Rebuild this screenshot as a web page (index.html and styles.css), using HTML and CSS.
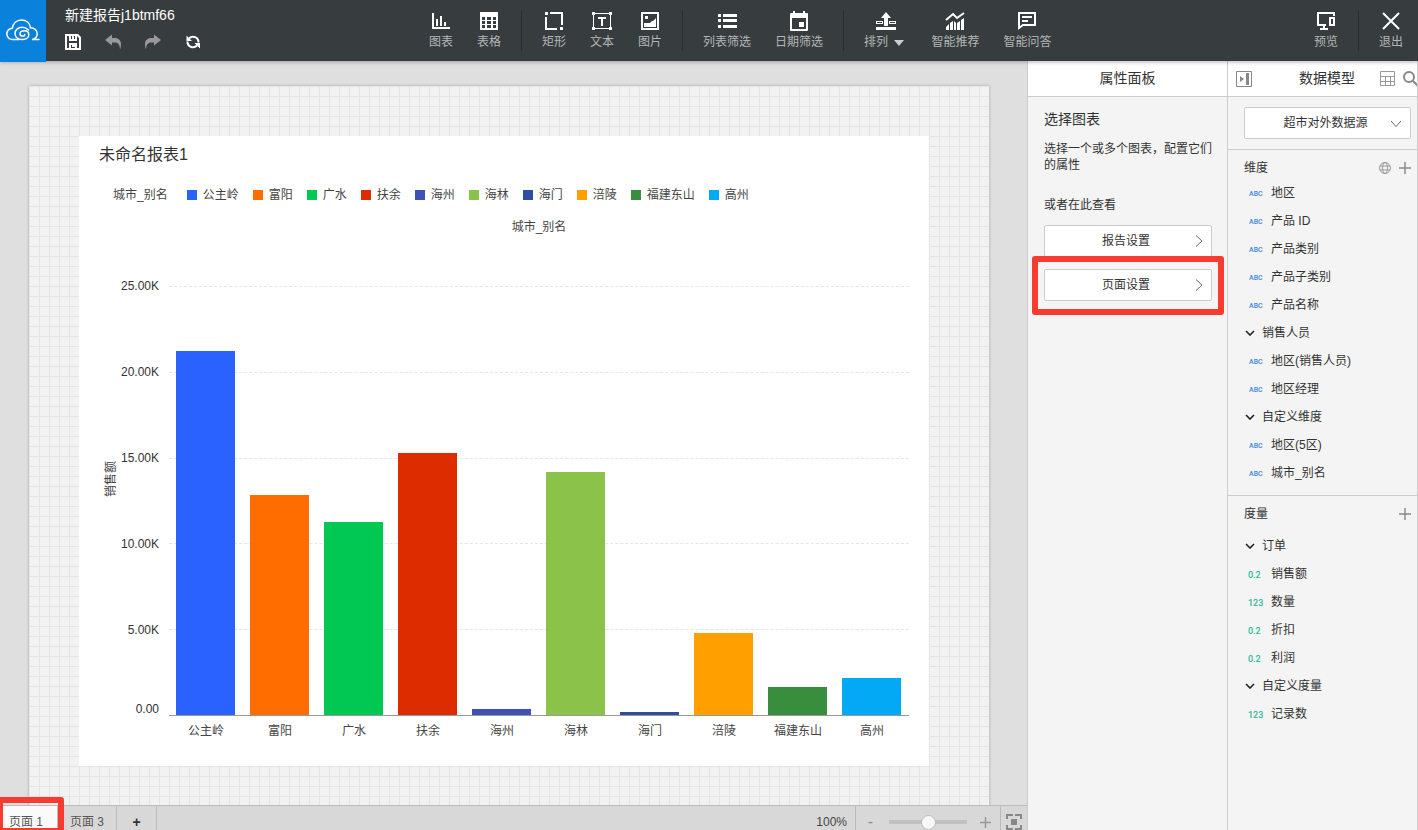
FILE: index.html
```html
<!DOCTYPE html>
<html lang="zh-CN">
<head>
  <meta charset="UTF-8">
  <meta name="viewport" content="width=device-width, initial-scale=1.0">
  <title>新建报告j1btmf66</title>
  <link rel="stylesheet" href="styles.css">
</head>
<body>
  <!-- 顶部工具栏 -->
  <header class="topbar">
    <a class="logo" href="#" aria-label="首页">
      <svg width="34" height="24" viewBox="0 0 34 24" fill="none" stroke="#fff" stroke-width="1.5" stroke-linecap="round">
        <path d="M13 20.500H6.500A5.600 5.600 0 0 1 6.300 9.300C7 4.500 10.500 1 15.500 1c4.700 0 8.300 3.200 9 7.800 4 0 6.700 2.700 6.700 6 0 3-2 5.200-5.200 5.700h7"/>
        <path d="M22.500 11C20.800 9.200 18.500 8.300 16 8.300c-4 0-7 2.700-7 6.200s3 6 7 6c4.200 0 6.800-2.200 6.800-4.800 0-2.400-2-3.900-4.400-3.900-2.600 0-4.400 1.200-4.400 2.900 0 1.500 1.200 2.400 2.700 2.400 1.200 0 2.100-.6 2.100-1.600"/>
      </svg>
    </a>
    <div class="report">
      <div class="report-name">新建报告j1btmf66</div>
      <div class="report-actions">
        <button aria-label="保存">
          <svg width="16" height="16" viewBox="0 0 16 16"><path fill="#fff" fill-rule="evenodd" d="M0 0h13l3 3v13H0zM2 2v12h2V9h8v5h2V4l-2-2v5H4V2zM6 2v3h1V2zM9 2v3h1V2zM6 11v3h4v-1H7v-2z"/></svg>
        </button>
        <button aria-label="撤销">
          <svg width="16" height="16" viewBox="0 0 16 16"><path fill="#999" d="M0 6l7-5.500v3.500h3c3.500 0 6 2.500 6 6 0 2-.3 4-1 5.500C15 11 13 8.500 10 8.500H7v3z"/></svg>
        </button>
        <button aria-label="重做">
          <svg width="16" height="16" viewBox="0 0 16 16"><path fill="#999" d="M16 6l-7-5.500v3.500H6c-3.500 0-6 2.500-6 6 0 2 .3 4 1 5.500C1 11 3 8.500 6 8.500h3v3z"/></svg>
        </button>
        <button aria-label="刷新">
          <svg width="16" height="16" viewBox="0 0 16 16" fill="none" stroke="#fff" stroke-width="2"><path d="M4 4.500a5.500 5.500 0 0 1 9.500 4M12 11.500A5.500 5.500 0 0 1 2.500 7.500"/><path fill="#fff" stroke="none" d="M1.500 1.500V7H7zM15 14.500V9H9.500z"/></svg>
        </button>
      </div>
    </div>
    <nav class="tools">
      <button class="tool">
        <svg width="20" height="20" viewBox="0 0 20 20" fill="#fff"><path d="M1 2h2v14h16v2H1zM5 8h2v7H5zM9 5h2v10H9zM13 11h2v4h-2z"/></svg>
        <span>图表</span>
      </button>
      <button class="tool">
        <svg width="20" height="20" viewBox="0 0 20 20"><path fill="#fff" fill-rule="evenodd" d="M1 1h18v18H1zM3 6v3h3V6zM8 6v3h4V6zM14 6v3h3V6zM3 10v3h3v-3zM8 10v3h4v-3zM14 10v3h3v-3zM3 14v3h3v-3zM8 14v3h4v-3zM14 14v3h3v-3z"/></svg>
        <span>表格</span>
      </button>
      <i class="sep"></i>
      <button class="tool">
        <svg width="20" height="20" viewBox="0 0 20 20"><path fill="#fff" d="M1 1h3v3H1zM6 1h13v13h-2V3H6zM1 6h2v11h10v2H1zM16 16h3v3h-3z"/></svg>
        <span>矩形</span>
      </button>
      <button class="tool">
        <svg width="20" height="20" viewBox="0 0 20 20"><path fill="none" stroke="#fff" d="M1.500 2.500h17v15h-17z"/><path fill="#fff" d="M0 1h3v3H0zM17 1h3v3h-3zM0 16h3v3H0zM17 16h3v3h-3zM6 6h8v2h-3v7H9V8H6z"/></svg>
        <span>文本</span>
      </button>
      <button class="tool">
        <svg width="20" height="20" viewBox="0 0 20 20"><path fill="none" stroke="#fff" stroke-width="2" d="M2 2h16v16H2z"/><path fill="#fff" d="M5 5h3v3H5zM4 12h6l2-2h1l3-3v9H4z"/></svg>
        <span>图片</span>
      </button>
      <i class="sep"></i>
      <button class="tool">
        <svg width="20" height="20" viewBox="0 0 20 20"><path fill="#fff" d="M1 3h3v3H1zM6 3h14v3H6zM1 8h3v3H1zM6 8h14v3H6zM1 14h3v3H1zM6 14h14v3H6z"/></svg>
        <span>列表筛选</span>
      </button>
      <button class="tool">
        <svg width="20" height="20" viewBox="0 0 20 20"><path fill="#fff" fill-rule="evenodd" d="M1 3q0-1 1-1h2V0h2v2h8V0h2v2h2q1 0 1 1v16q0 1-1 1H2q-1 0-1-1zM3 7v11h14V7zM10 11h5v5h-5z"/></svg>
        <span>日期筛选</span>
      </button>
      <i class="sep"></i>
      <button class="tool">
        <svg width="20" height="20" viewBox="0 0 20 20"><path fill="#fff" fill-rule="evenodd" d="M10 1l5 6h-3v8H8V7H5zM0 10h7v3H0zM1 11v1h5v-1zM13 10h7v3h-7zM14 11v1h5v-1zM0 16h20v3H0z"/></svg>
        <span>排列 <i class="caret"></i></span>
      </button>
      <button class="tool">
        <svg width="20" height="20" viewBox="0 0 20 20"><path fill="none" stroke="#fff" stroke-width="2" d="M1 9l7-6 4 4 7-5"/><path fill="#fff" d="M1 16l3-3v6H1zM5 12l3-2v9H5zM9 10l2 2v7H9zM12 12l3-2v9h-3zM16 9l3-2v12h-3z"/></svg>
        <span>智能推荐</span>
      </button>
      <button class="tool">
        <svg width="20" height="20" viewBox="0 0 20 20"><path fill="none" stroke="#fff" stroke-width="2" d="M2 2h16v12H6l-4 3zM5 6h10M5 10h6"/></svg>
        <span>智能问答</span>
      </button>
    </nav>
    <nav class="tools tools-end">
      <button class="tool">
        <svg width="20" height="20" viewBox="0 0 20 20"><path fill="none" stroke="#fff" stroke-width="2" d="M18 5V2H2v12h8M14 7h4v7h-4zM8 14v4M4 18h8"/></svg>
        <span>预览</span>
      </button>
      <i class="sep"></i>
      <button class="tool">
        <svg width="20" height="20" viewBox="0 0 20 20"><path stroke="#fff" stroke-width="2" d="M2 2l16 16M18 2L2 18"/></svg>
        <span>退出</span>
      </button>
    </nav>
  </header>

  <div class="layout">
    <!-- 画布 -->
    <main class="workspace">
      <div class="stage">
        <div class="sheet">
          <section class="card">
            <h1 class="card-title">未命名报表1</h1>
            <div class="legend">
              <span class="legend-title">城市_别名</span>
              <span class="legend-item c1">公主岭</span>
              <span class="legend-item c2">富阳</span>
              <span class="legend-item c3">广水</span>
              <span class="legend-item c4">扶余</span>
              <span class="legend-item c5">海州</span>
              <span class="legend-item c6">海林</span>
              <span class="legend-item c7">海门</span>
              <span class="legend-item c8">涪陵</span>
              <span class="legend-item c9">福建东山</span>
              <span class="legend-item c10">高州</span>
            </div>
            <div class="axis-title">城市_别名</div>
            <div class="chart">
              <div class="y-title">销售额</div>
              <div class="y-axis">
                <span>25.00K</span>
                <span>20.00K</span>
                <span>15.00K</span>
                <span>10.00K</span>
                <span>5.00K</span>
                <b>0.00</b>
              </div>
              <div class="plot">
                <div class="lines"><i></i><i></i><i></i><i></i><i></i></div>
                <div class="bars">
                  <div class="bar c1" style="height:84.8%"></div>
                  <div class="bar c2" style="height:51.3%"></div>
                  <div class="bar c3" style="height:45%"></div>
                  <div class="bar c4" style="height:61.1%"></div>
                  <div class="bar c5" style="height:1.4%"></div>
                  <div class="bar c6" style="height:56.6%"></div>
                  <div class="bar c7" style="height:0.7%"></div>
                  <div class="bar c8" style="height:19.1%"></div>
                  <div class="bar c9" style="height:6.5%"></div>
                  <div class="bar c10" style="height:8.6%"></div>
                </div>
              </div>
              <div class="x-axis">
                <span>公主岭</span><span>富阳</span><span>广水</span><span>扶余</span><span>海州</span><span>海林</span><span>海门</span><span>涪陵</span><span>福建东山</span><span>高州</span>
              </div>
            </div>
          </section>
        </div>
      </div>

      <!-- 页签与缩放 -->
      <footer class="bottombar">
        <div class="tab-wrap">
          <button class="tab active">页面 1</button>
          <div class="mark mark-tab"></div>
        </div>
        <button class="tab">页面 3</button>
        <button class="tab tab-add" aria-label="新增页面">+</button>
        <span class="zoom-value">100%</span>
        <div class="zoom">
          <button aria-label="缩小">-</button>
          <input type="range" min="0" max="200" value="100" aria-label="缩放">
          <button aria-label="放大">
            <svg width="11" height="11" viewBox="0 0 11 11"><path stroke="#999" stroke-width="1.500" d="M0 5.500h11M5.500 0v11"/></svg>
          </button>
        </div>
        <button class="fit" aria-label="适应画布">
          <svg width="16" height="16" viewBox="0 0 16 16"><path fill="#888" d="M0 0h7v2H2v3H0zM9 0h7v5h-2V2H9zM0 11h2v3h5v2H0zM14 11h2v5H9v-2h5zM5 5h6v6H5z"/></svg>
        </button>
      </footer>
    </main>

    <!-- 属性面板 -->
    <aside class="panel props">
      <div class="panel-head">属性面板</div>
      <div class="props-body">
        <h2>选择图表</h2>
        <p class="hint">选择一个或多个图表，配置它们的属性</p>
        <p class="see">或者在此查看</p>
        <button class="setting">
          <span>报告设置</span>
          <svg width="8" height="12" viewBox="0 0 8 12"><path fill="none" stroke="#666" d="M1 .5L7 6l-6 5.500"/></svg>
        </button>
        <div class="marked">
          <button class="setting">
            <span>页面设置</span>
            <svg width="8" height="12" viewBox="0 0 8 12"><path fill="none" stroke="#666" d="M1 .5L7 6l-6 5.500"/></svg>
          </button>
          <div class="mark mark-setting"></div>
        </div>
      </div>
    </aside>

    <!-- 数据模型 -->
    <aside class="panel model">
      <div class="panel-head model-head">
        <button aria-label="收起">
          <svg width="16" height="16" viewBox="0 0 16 16"><path fill="none" stroke="#888" d="M.5.5h15v15H.5z"/><path fill="#888" d="M4 5l4 3-4 3zM10 2h3v12h-3z"/></svg>
        </button>
        <span>数据模型</span>
        <button aria-label="计算">
          <svg width="15" height="15" viewBox="0 0 15 15"><path fill="none" stroke="#999" d="M.5.5h14v14H.5zM0 5.500h15M0 10.500h15M5.500 5v10M10.500 5v10"/></svg>
        </button>
        <button aria-label="搜索">
          <svg width="16" height="16" viewBox="0 0 16 16"><circle cx="6" cy="6" r="5" fill="none" stroke="#888" stroke-width="2"/><path stroke="#888" stroke-width="2" d="M9.500 9.500l6 6"/></svg>
        </button>
      </div>
      <div class="source">
        <select aria-label="数据源">
          <option>超市对外数据源</option>
        </select>
        <svg width="12" height="8" viewBox="0 0 12 8"><path fill="none" stroke="#666" d="M1 1l5 5.500L11 1"/></svg>
      </div>
      <section class="fields dims">
        <div class="fields-head">
          <h3>维度</h3>
          <button aria-label="地理角色">
            <svg width="12" height="12" viewBox="0 0 12 12" fill="none" stroke="#999"><circle cx="6" cy="6" r="5.500"/><ellipse cx="6" cy="6" rx="2.500" ry="5.500"/><path d="M1 4h10M1 8h10"/></svg>
          </button>
          <button aria-label="添加维度">
            <svg width="12" height="12" viewBox="0 0 12 12"><path stroke="#888" stroke-width="1.400" d="M0 6h12M6 0v12"/></svg>
          </button>
        </div>
        <ul>
          <li><i class="abc">ABC</i>地区</li>
          <li><i class="abc">ABC</i>产品 ID</li>
          <li><i class="abc">ABC</i>产品类别</li>
          <li><i class="abc">ABC</i>产品子类别</li>
          <li><i class="abc">ABC</i>产品名称</li>
          <li class="group"><svg width="10" height="6" viewBox="0 0 10 6"><path fill="none" stroke="#222" stroke-width="1.600" d="M1 1l4 4 4-4"/></svg>销售人员</li>
          <li><i class="abc">ABC</i>地区(销售人员)</li>
          <li><i class="abc">ABC</i>地区经理</li>
          <li class="group"><svg width="10" height="6" viewBox="0 0 10 6"><path fill="none" stroke="#222" stroke-width="1.600" d="M1 1l4 4 4-4"/></svg>自定义维度</li>
          <li><i class="abc">ABC</i>地区(5区)</li>
          <li><i class="abc">ABC</i>城市_别名</li>
        </ul>
      </section>
      <section class="fields measures">
        <div class="fields-head">
          <h3>度量</h3>
          <button aria-label="添加度量">
            <svg width="12" height="12" viewBox="0 0 12 12"><path stroke="#888" stroke-width="1.400" d="M0 6h12M6 0v12"/></svg>
          </button>
        </div>
        <ul>
          <li class="group"><svg width="10" height="6" viewBox="0 0 10 6"><path fill="none" stroke="#222" stroke-width="1.600" d="M1 1l4 4 4-4"/></svg>订单</li>
          <li><i class="num">0.2</i>销售额</li>
          <li><i class="num">123</i>数量</li>
          <li><i class="num">0.2</i>折扣</li>
          <li><i class="num">0.2</i>利润</li>
          <li class="group"><svg width="10" height="6" viewBox="0 0 10 6"><path fill="none" stroke="#222" stroke-width="1.600" d="M1 1l4 4 4-4"/></svg>自定义度量</li>
          <li><i class="num">123</i>记录数</li>
        </ul>
      </section>
    </aside>
  </div>
</body>
</html>
```

FILE: styles.css
```css
* { box-sizing:border-box; }
body { margin:0; height:100vh; display:flex; flex-direction:column; overflow:hidden; font-family:"Liberation Sans","Noto Sans CJK SC",sans-serif; font-size:12px; line-height:16px; color:#333; background:#f4f4f4; }
h1, h2, h3, p, ul { margin:0; padding:0; font-weight:normal; }
ul { list-style:none; }
i { font-style:normal; }
svg { display:block; flex:none; }
button { padding:0; border:0; background:none; font:inherit; color:inherit; cursor:pointer; }

/* 顶部工具栏 */
.topbar { display:flex; flex:none; height:61px; background:#373d3f; box-shadow:0 1px 4px rgba(0,0,0,0.3); position:relative; z-index:5; }
.logo { display:flex; justify-content:center; align-items:center; flex:none; width:46px; height:62px; background:#0a82dc; }
.report { flex:none; width:371px; padding:6px 0 0 19px; color:#fff; }
.report-name { font-size:14px; line-height:18px; }
.report-actions { display:flex; gap:24px; margin-top:10px; }
.tools { display:flex; align-items:center; }
.tools-end { margin-left:auto; padding-right:3px; }
.tool { display:flex; flex-direction:column; align-items:center; gap:3px; padding:0 12px; color:#b3b5b6; white-space:nowrap; }
.sep { width:1px; height:40px; margin:0 8px; background:#282c2e; }
.caret { display:inline-block; margin:0 3px; border:5px solid transparent; border-top:6px solid #ccc; border-bottom:0; }

.layout { display:flex; flex:1; min-height:0; }

/* 画布 */
.workspace { display:flex; flex-direction:column; flex:1; min-width:0; background:#dfdfdf; }
.stage { flex:1; min-height:0; padding:25px 38px 0 29px; overflow:hidden; }
.sheet {
  height:1000px; padding:50px 60px 0 50px; background-color:#f2f2f2; box-shadow:0 0 3px rgba(0,0,0,0.25);
  background-image:linear-gradient(to right,#e4e4e4 1px,transparent 1px),linear-gradient(to bottom,#e4e4e4 1px,transparent 1px);
  background-size:10px 10px;
}
.card { height:630px; padding:9px 20px 20px; background:#fff; display:flex; flex-direction:column; }
.card-title { font-size:16px; line-height:20px; }
.legend { display:flex; align-items:center; gap:14px; margin:22px 0 0 14px; color:#444; }
.legend-title { margin-right:5px; }
.legend-item { display:flex; align-items:center; gap:6px; }
.legend-item::before { content:""; width:10px; height:10px; background:var(--c); }
.axis-title { margin-top:16px; padding-left:70px; text-align:center; }
.axis-title, .x-axis, .y-title { color:#444; }
.chart { flex:1; display:grid; grid-template-columns:20px 50px 1fr; grid-template-rows:1fr 30px; margin-top:51px; }
.y-title { writing-mode:vertical-rl; text-orientation:sideways; transform:rotate(180deg); justify-self:end; align-self:center; margin-bottom:44px; }
.y-axis { display:flex; flex-direction:column; text-align:right; padding-right:10px; }
.y-axis span { flex:1; margin-top:-8px; padding-bottom:8px; }
.y-axis b { height:0; margin-top:-15px; padding-bottom:15px; font-weight:normal; }
.plot { display:grid; border-bottom:1px solid #999; }
.lines, .bars { grid-area:1 / 1; display:flex; }
.lines { flex-direction:column; }
.lines i { flex:1; border-top:1px dashed #e5e5e5; }
.bars { align-items:flex-end; }
.bar { flex:1; border:solid transparent; border-width:0 8px 0 7px; background:var(--c); background-clip:padding-box; }
.x-axis { grid-column:3; display:flex; text-align:center; padding-top:7px; }
.x-axis span { flex:1; }

.c1 { --c:#2962ff; }
.c2 { --c:#ff6d00; }
.c3 { --c:#00c853; }
.c4 { --c:#dd2c00; }
.c5 { --c:#3f51b5; }
.c6 { --c:#8bc34a; }
.c7 { --c:#304ba3; }
.c8 { --c:#ffa000; }
.c9 { --c:#388e3c; }
.c10 { --c:#03a9f4; }

/* 底部页签，超出窗口的部分被裁掉 */
.bottombar { display:flex; flex:none; height:25px; border-top:1px solid #bbb; background:#d8d8d8; position:relative; z-index:2; }
.bottombar > * { height:32px; }
.tab-wrap { position:relative; }
.tab { width:58px; height:32px; border-right:1px solid #bbb; color:#555; }
.tab-wrap + .tab { width:59px; }
.tab.active { background:#fafafa; padding-right:5px; }
.tab-add { width:40px; font-weight:bold; font-size:14px; color:#333; }
.zoom-value { margin-left:auto; padding:8px; color:#444; }
.zoom { display:flex; align-items:center; gap:13px; padding:0 9px; border:solid #bbb; border-width:0 1px; color:#888; }
.zoom button { width:11px; display:flex; justify-content:center; font-size:16px; }
.zoom input { width:78px; height:16px; margin:0; appearance:none; background:linear-gradient(#c1c1c1,#c1c1c1) center / 100% 4px no-repeat; }
.zoom input::-webkit-slider-thumb { appearance:none; width:15px; height:15px; border:1px solid #bbb; border-radius:50%; background:#f8f8f8; }
.fit { display:flex; align-items:center; padding:0 5px; }

/* 右侧面板 */
.panel { flex:none; border-left:1px solid #ccc; background:#f4f4f4; }
.panel-head { height:36px; border-bottom:1px solid #ccc; background:#fff; font-size:14px; line-height:35px; text-align:center; }
.props { width:200px; }
.props-body { padding:12px 15px 0 16px; }
.props-body h2 { font-size:14px; line-height:20px; }
.hint { margin-top:12px; }
.see { margin:24px 0 12px; }
.setting { display:flex; align-items:center; width:100%; height:32px; padding:0 8px 0 12px; border:1px solid #ccc; border-radius:2px; background:#fff; }
.setting span { flex:1; }
.marked { position:relative; margin-top:12px; }
.mark { position:absolute; border:6px solid #f83b2f; border-radius:3px; pointer-events:none; }
.mark-setting { inset:-13px -12px -14px; }
.mark-tab { left:-3px; top:-9px; width:67px; height:37px; }

.model { width:191px; border-right:1px solid #ccc; overflow:hidden; }
.model-head { display:flex; align-items:center; padding-left:8px; }
.model-head span { flex:1; padding-left:22px; }
.model-head button:last-child { margin:0 -2px 0 8px; }
.source { position:relative; padding:10px 6px 10px 16px; height:53px; border-bottom:1px solid #ccc; }
.source select { width:100%; height:32px; padding:0 4px 0 0; appearance:none; border:1px solid #ccc; border-radius:2px; background:#fff; font:inherit; color:#333; text-align-last:center; }
.source svg { position:absolute; right:15px; top:23px; pointer-events:none; }
.fields-head { display:flex; align-items:center; gap:8px; height:36px; padding:0 6px 0 16px; }
.fields-head h3 { flex:1; font-size:12px; }
.dims { padding-bottom:8px; border-bottom:1px solid #ccc; }
.dims .fields-head { height:29px; padding-top:6px; }
.fields li { display:flex; align-items:center; height:28px; padding-left:18px; }
.fields li i { width:25px; padding:2px 0 0 2px; font-family:Roboto,sans-serif; font-weight:500; }
.fields li .abc { padding-left:3px; font-size:7px; color:#3c87dd; }
.fields li .num { font-size:9px; color:#2fb99a; }
.fields .group { padding-left:17px; gap:7px; }
```
